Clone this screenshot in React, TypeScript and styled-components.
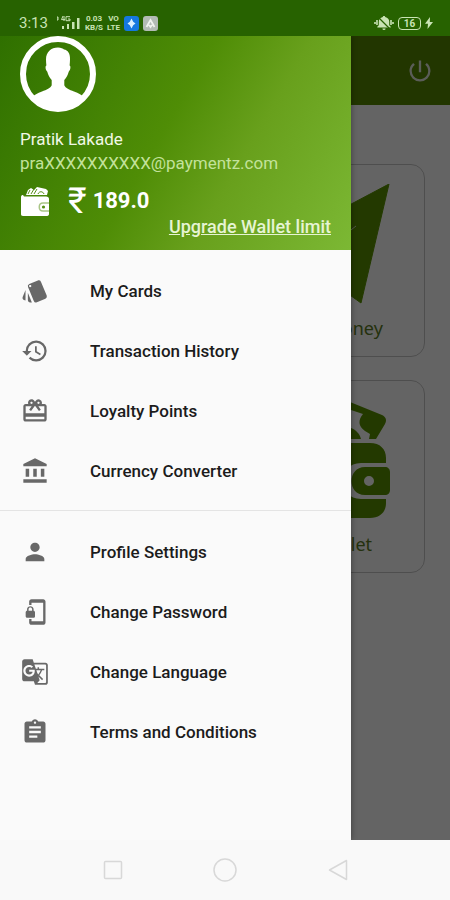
import React from "react";
import styled, { createGlobalStyle } from "styled-components";
import {
  MdStyle,
  MdHistory,
  MdCardGiftcard,
  MdAccountBalance,
  MdPerson,
  MdPhonelinkLock,
  MdGTranslate,
  MdAssignment,
  MdPowerSettingsNew,
} from "react-icons/md";
import type { IconType } from "react-icons";

const GlobalStyle = createGlobalStyle`
  *, *::before, *::after { box-sizing: border-box; }
  body {
    margin: 0;
    background: #fafafa;
    font-family: Roboto, "Liberation Sans", sans-serif;
  }
  button { border: 0; padding: 0; background: none; font: inherit; color: inherit; cursor: pointer; }
`;

const Screen = styled.div`
  display: flex;
  flex-direction: column;
  min-height: 100vh;
`;

const StatusBar = styled.header`
  display: flex;
  justify-content: space-between;
  align-items: flex-end;
  height: 36px;
  padding: 0 17px 4px 19px;
  background: #276200;
  color: #c9e3b4;
`;

const StatusGroup = styled.div<{ $gap: number }>`
  display: flex;
  align-items: center;
  gap: ${(p) => p.$gap}px;
  height: 18px;
`;

const Clock = styled.span`
  font-size: 15px;
  line-height: 18px;
  margin-right: 5px;
`;

const TinyStack = styled.span`
  display: flex;
  flex-direction: column;
  align-items: center;
  font-size: 8px;
  font-weight: 700;
  line-height: 9px;
`;

const Stage = styled.main`
  display: grid;
  grid-template: 1fr / 1fr;
  flex: 1;
`;

const layer = "grid-area: 1 / 1;";

const Home = styled.section`
  ${layer}
  background: #fafafa;
`;

const AppBar = styled.div`
  display: flex;
  justify-content: flex-end;
  align-items: center;
  height: 69px;
  padding: 0 16px;
  background: #558700;
  color: #e4e8dd;
  font-size: 28px;
`;

const IconButton = styled.button`
  display: flex;
`;

const Tiles = styled.div`
  display: grid;
  grid-template-columns: 1fr 1fr;
  gap: 23px;
  padding: 59px 25px;
`;

const Tile = styled.button`
  grid-column: 2;
  display: flex;
  flex-direction: column;
  align-items: center;
  justify-content: space-between;
  height: 193px;
  padding: 19px 0 16px;
  border: 1px solid #c4c4c4;
  border-radius: 14px;
  color: #5a7a25;
  font-family: "Noto Sans", sans-serif;
  font-size: 18px;
  line-height: 24px;
`;

const Scrim = styled.div`
  ${layer}
  background: rgba(0, 0, 0, 0.6);
`;

const Drawer = styled.aside`
  ${layer}
  width: 78%;
  background: #fafafa;
  box-shadow: 0 0 6px rgba(0, 0, 0, 0.4);
  clip-path: inset(0 -8px 0 0);
`;

const Profile = styled.div`
  display: flex;
  flex-direction: column;
  padding: 0 20px 13px;
  background: linear-gradient(120deg, #2f7000 0%, #4f8d06 46%, #68a01c 66%, #7cb834 100%);
  color: #fff;
`;

const Name = styled.span`
  margin-top: 15px;
  font-size: 17px;
  line-height: 24px;
  color: #f1f8e6;
`;

const Email = styled.span`
  font-size: 17px;
  line-height: 24px;
  color: #c3e29b;
`;

const Balance = styled.div`
  display: flex;
  align-items: center;
  height: 32px;
  margin-top: 10px;
`;

const Rupee = styled.span`
  margin: 0 6px 0 17px;
  font-size: 36px;
  line-height: 32px;
`;

const Amount = styled.span`
  font-size: 22px;
  font-weight: 700;
  line-height: 32px;
`;

const UpgradeLink = styled.a`
  align-self: flex-end;
  font-size: 18px;
  font-weight: 500;
  line-height: 20px;
  color: #e6f4d3;
`;

const MenuGroup = styled.ul`
  list-style: none;
  margin: 0;
  padding: 11px 0 9px;

  & + & {
    border-top: 1px solid #e4e4e4;
  }
`;

const MenuButton = styled.button`
  display: flex;
  align-items: center;
  gap: 41px;
  width: 100%;
  height: 60px;
  padding: 0 21px;
  text-align: left;
  font-size: 17px;
  font-weight: 500;
  line-height: 24px;
  color: #1c1c1c;

  svg {
    flex: none;
    width: 28px;
    height: 28px;
    color: #686868;
  }
`;

const SystemNav = styled.nav`
  display: grid;
  grid-template-columns: repeat(3, 25%);
  justify-content: center;
  align-items: center;
  height: 60px;
  background: #f9f9f9;
`;

const NavButton = styled.button`
  display: flex;
  justify-content: center;

  svg {
    fill: none;
    stroke: #d8d8d8;
    stroke-width: 1.5;
  }
`;

const SignalIcon = () => (
  <svg width="24" height="14" viewBox="0 0 24 14" fill="currentColor" aria-hidden="true">
    <path d="M0 1h1v3H0zM6 0 4.5 3.6H8M7 0v5M9 .7h4M9 .7v4h4V3h-2" fill="none" stroke="currentColor" strokeWidth="1" />
    <path d="M5 10h2v3H5zM10 8h2v5h-2zM15 6h2.5v7H15zM20 2h2.5v11H20z" />
  </svg>
);

const AppBadge = ({ tone }: { tone: "blue" | "gray" }) => (
  <svg width="15" height="15" viewBox="0 0 15 15" aria-hidden="true">
    <rect width="15" height="15" rx="3" fill={tone === "blue" ? "#1578e0" : "#b3bbb5"} />
    {tone === "blue" ? (
      <path d="M7.5 2.5 9.2 5.8 11.5 7.5 9.2 9.2 7.5 12.5 5.8 9.2 3.5 7.5 5.8 5.8z" fill="#d9efff" />
    ) : (
      <path d="m3.5 11 4-7 4 7M6 9l1.5 2L9 9" fill="none" stroke="#f0f3ef" strokeWidth="1.8" />
    )}
  </svg>
);

const MutedBellIcon = () => (
  <svg width="20" height="16" viewBox="0 0 20 16" aria-hidden="true">
    <path
      d="M10 1c.8 0 1.2.5 1.2 1.1 2.600.600 4 2.400 4 4.400v3.700l1.500 1.600v.8H3.300v-.8l1.500-1.600V6.500c0-2 1.400-3.800 4-4.400C8.800 1.500 9.200 1 10 1zM8.400 13.400h3.200a1.600 1.600 0 0 1-3.200 0z"
      fill="currentColor"
    />
    <path d="M3 5v5M1 7v2M17 5v5M19 7v2" stroke="currentColor" strokeWidth="1.6" />
    <path d="m4 2 12 12" stroke="#276200" strokeWidth="1.2" />
  </svg>
);

const BatteryShell = styled.span`
  display: flex;
  align-items: center;
  justify-content: center;
  width: 23px;
  height: 13px;
  border: 1px solid currentColor;
  border-radius: 4px;
  font-size: 10px;
  font-weight: 700;
  line-height: 11px;
`;

const BoltIcon = () => (
  <svg width="8" height="12" viewBox="0 0 8 12" aria-hidden="true">
    <path d="M5 0 0 6.8h3L2.5 12 8 5H4.8z" fill="currentColor" />
  </svg>
);

const Avatar = () => (
  <svg width="76" height="76" viewBox="0 0 76 76" role="img" aria-label="Profile photo">
    <circle cx="38" cy="38" r="35" fill="none" stroke="#fff" strokeWidth="6" />
    <path
      d="M38 11.5c3 0 5 1.2 6 2 3.8.5 6.3 4 6 10 0 2-.2 4-.4 6 1.2.3 1.2 4.2-.9 6.2-.7 3.3-2.4 6-4.4 8.3v5.2c1.2 3 5 4.4 9.700 6.3 4.6 1.9 8 3.2 10.500 6.4C58 69.5 48.500 74 38 74S18 69.5 11.500 61.900c2.500-3.200 6-4.500 10.500-6.400 4.700-1.900 8.500-3.300 9.700-6.300V44c-2-2.300-3.700-5-4.400-8.300-2.100-2-2.100-5.900-.9-6.200-.2-2-.4-4-.4-6 0-7.500 5-12 12-12z"
      fill="#fff"
    />
  </svg>
);

const WalletIcon = () => (
  <svg width="31" height="31" viewBox="0 0 31 31" aria-hidden="true">
    <path d="M6 9 8 4l3-2 3 2 3-3 9 2 2 2-1 4H6z" fill="#fff" />
    <path d="m8 8 2-4m1 4 3-5M14 8l3-5M18 8c1-3 5-3 6 0M3 10h24" fill="none" stroke="#568f14" strokeWidth="1" />
    <path d="M1 11c0-1.500 1-2 2-2l1 1.500h22c2 0 3 1 3 2.500v15c0 1.500-1 2-3 2H3c-1.500 0-2-1-2-2z" fill="#fff" />
    <path d="M29 17h-6c-5 0-5 8 0 8h6" fill="none" stroke="#a9c586" strokeWidth="1.5" />
    <circle cx="23.500" cy="21" r="1.600" fill="#568f14" />
  </svg>
);

const SendIcon = () => (
  <svg width="118" height="120" viewBox="0 0 118 120" aria-hidden="true">
    <path d="M117 0 0 62l30 14v37l20-22 39 28z" fill="#589000" stroke="#589000" strokeLinejoin="round" />
    <path d="m38 78 46-36" stroke="#d0dcc0" strokeWidth="1" />
  </svg>
);

const BigWalletIcon = () => (
  <svg width="118" height="118" viewBox="0 0 118 118" fill="#589000" aria-hidden="true">
    <path d="M10 34 65 4c4-4 8-4 13-2l32 13c4 2 5 5 3 9l-9 15h-7l1-5-5-3c-7-5-7-11-2-17l-12-4-43 24z" />
    <path d="M58 39c0-12 11-16 21-11 5 2 9 6 10 11z" />
    <path d="M4 43h94c10 0 16 6 16 15v5H89c-24 0-24 36 0 36h25v4c0 9-6 15-16 15H19c-10 0-15-6-15-15z" />
    <path
      fillRule="evenodd"
      d="M93 67h20c3 0 5 2 5 5v18c0 3-2 5-5 5H93c-18 0-18-28 0-28zm4 9a5 5 0 1 0 0 10 5 5 0 0 0 0-10z"
    />
  </svg>
);

interface MenuEntry {
  label: string;
  icon: IconType;
}

const menuGroups: MenuEntry[][] = [
  [
    { label: "My Cards", icon: MdStyle },
    { label: "Transaction History", icon: MdHistory },
    { label: "Loyalty Points", icon: MdCardGiftcard },
    { label: "Currency Converter", icon: MdAccountBalance },
  ],
  [
    { label: "Profile Settings", icon: MdPerson },
    { label: "Change Password", icon: MdPhonelinkLock },
    { label: "Change Language", icon: MdGTranslate },
    { label: "Terms and Conditions", icon: MdAssignment },
  ],
];

export default function App() {
  return (
    <Screen>
      <GlobalStyle />
      <StatusBar>
        <StatusGroup $gap={4}>
          <Clock>3:13</Clock>
          <SignalIcon />
          <TinyStack>
            <span>0.03</span>
            <span>KB/S</span>
          </TinyStack>
          <TinyStack>
            <span>VO</span>
            <span>LTE</span>
          </TinyStack>
          <AppBadge tone="blue" />
          <AppBadge tone="gray" />
        </StatusGroup>
        <StatusGroup $gap={4}>
          <MutedBellIcon />
          <BatteryShell>16</BatteryShell>
          <BoltIcon />
        </StatusGroup>
      </StatusBar>

      <Stage>
        <Home>
          <AppBar>
            <IconButton aria-label="Log out">
              <MdPowerSettingsNew />
            </IconButton>
          </AppBar>
          <Tiles>
            <Tile>
              <SendIcon />
              Send Money
            </Tile>
            <Tile>
              <BigWalletIcon />
              My Wallet
            </Tile>
          </Tiles>
        </Home>
        <Scrim />
        <Drawer>
          <Profile>
            <Avatar />
            <Name>Pratik Lakade</Name>
            <Email>praXXXXXXXXXX@paymentz.com</Email>
            <Balance>
              <WalletIcon />
              <Rupee>₹</Rupee>
              <Amount>189.0</Amount>
            </Balance>
            <UpgradeLink href="#upgrade">Upgrade Wallet limit</UpgradeLink>
          </Profile>
          {menuGroups.map((group) => (
            <MenuGroup key={group[0].label}>
              {group.map(({ label, icon: Icon }) => (
                <li key={label}>
                  <MenuButton>
                    <Icon aria-hidden="true" />
                    {label}
                  </MenuButton>
                </li>
              ))}
            </MenuGroup>
          ))}
        </Drawer>
      </Stage>

      <SystemNav>
        <NavButton aria-label="Recent apps">
          <svg width="20" height="20" viewBox="0 0 20 20">
            <rect x="1.5" y="1.5" width="17" height="17" rx="1" />
          </svg>
        </NavButton>
        <NavButton aria-label="Home">
          <svg width="24" height="24" viewBox="0 0 24 24">
            <circle cx="12" cy="12" r="11" />
          </svg>
        </NavButton>
        <NavButton aria-label="Back">
          <svg width="20" height="22" viewBox="0 0 20 22">
            <path d="M18.5 1.5v19L1.5 11z" strokeLinejoin="round" />
          </svg>
        </NavButton>
      </SystemNav>
    </Screen>
  );
}
